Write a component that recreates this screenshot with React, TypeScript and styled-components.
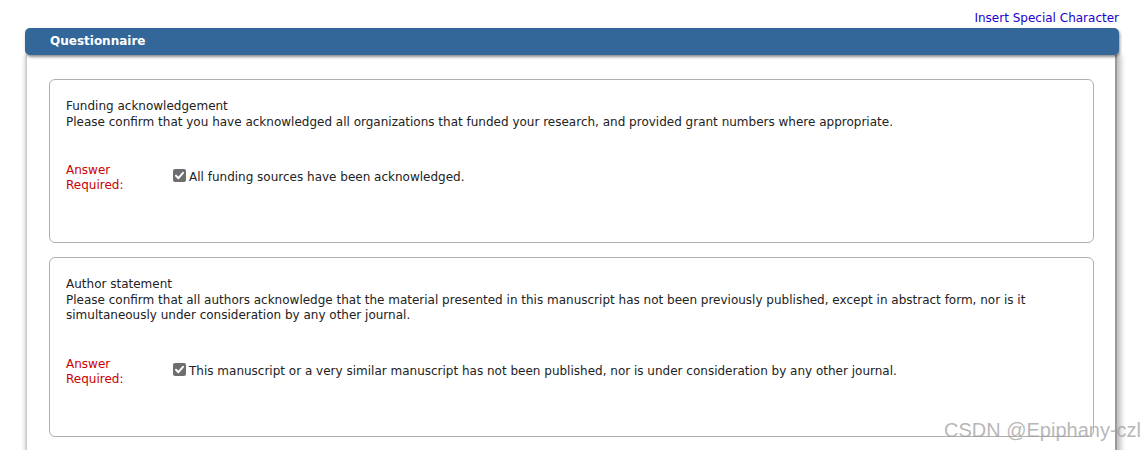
import styled, { createGlobalStyle } from 'styled-components'

const GlobalStyle = createGlobalStyle`
  html, body {
    margin: 0;
    padding: 0;
    background: #ffffff;
  }
  body {
    font-family: "DejaVu Sans", Verdana, sans-serif;
    font-size: 12px;
    color: #222;
  }
`

const questions = [
  {
    title: 'Funding acknowledgement',
    text: 'Please confirm that you have acknowledged all organizations that funded your research, and provided grant numbers where appropriate.',
    answer: 'All funding sources have been acknowledged.',
    height: 164,
  },
  {
    title: 'Author statement',
    text: 'Please confirm that all authors acknowledge that the material presented in this manuscript has not been previously published, except in abstract form, nor is it simultaneously under consideration by any other journal.',
    answer: 'This manuscript or a very similar manuscript has not been published, nor is under consideration by any other journal.',
    height: 180,
  },
]

const Check = () => (
  <CheckBox>
    <svg width="13" height="13" viewBox="0 0 13 13">
      <rect x="0" y="0" width="13" height="13" rx="2" fill="#6e6e6e" />
      <path d="M3 6.8 L5.4 9.2 L10 3.8" stroke="#fff" strokeWidth="2" fill="none" strokeLinecap="round" strokeLinejoin="round" />
    </svg>
  </CheckBox>
)

export default function App() {
  return (
    <Page>
      <GlobalStyle />
      <TopBar>
        <SpecialLink href="#">Insert Special Character</SpecialLink>
      </TopBar>
      <Panel>
        <PanelHeader>Questionnaire</PanelHeader>
        <PanelBody>
          {questions.map((q) => (
            <QuestionCard key={q.title} $height={q.height}>
              <QuestionTitle>{q.title}</QuestionTitle>
              <QuestionText>{q.text}</QuestionText>
              <AnswerRow>
                <RequiredLabel>
                  Answer
                  <br />
                  Required:
                </RequiredLabel>
                <AnswerOption>
                  <Check />
                  <AnswerText>{q.answer}</AnswerText>
                </AnswerOption>
              </AnswerRow>
            </QuestionCard>
          ))}
        </PanelBody>
      </Panel>
      <Watermark>CSDN @Epiphany-czl</Watermark>
    </Page>
  )
}

const Page = styled.div`
  position: relative;
  width: 1145px;
  height: 450px;
  overflow: hidden;
  padding: 10px 26px 0 25px;
  box-sizing: border-box;
`

const TopBar = styled.div`
  display: flex;
  justify-content: flex-end;
  height: 18px;
`

const SpecialLink = styled.a`
  font-size: 12px;
  color: #2200cc;
  text-decoration: none;
  line-height: 16px;
`

const Panel = styled.div`
  display: flex;
  flex-direction: column;
`

const PanelHeader = styled.div`
  height: 27px;
  background: #336699;
  color: #fff;
  font-weight: bold;
  font-size: 12px;
  line-height: 27px;
  padding-left: 25px;
  border-radius: 5px;
  box-shadow: 1px 2px 3px rgba(0, 0, 0, 0.45);
  position: relative;
  z-index: 1;
`

const PanelBody = styled.div`
  margin: 0 2px 0 1px;
  background: #fff;
  border-left: 1px solid #c8c8c8;
  border-right: 2px solid #9a9a9a;
  box-shadow: -2px 0 3px rgba(0, 0, 0, 0.15), 4px 0 5px rgba(0, 0, 0, 0.25);
  padding: 24px 21px 20px 22px;
  display: flex;
  flex-direction: column;
  gap: 14px;
`

const QuestionCard = styled.div<{ $height: number }>`
  height: ${(p) => p.$height}px;
  box-sizing: border-box;
  border: 1px solid #b0b0b0;
  border-radius: 6px;
  padding: 19px 16px 0 16px;
`

const QuestionTitle = styled.div`
  line-height: 15.5px;
  color: #222;
`

const QuestionText = styled.div`
  line-height: 15.5px;
  color: #222;
`

const AnswerRow = styled.div`
  display: flex;
  margin-top: 33px;
`

const RequiredLabel = styled.div`
  width: 107px;
  color: #cc0000;
  line-height: 15px;
  flex-shrink: 0;
`

const AnswerOption = styled.label`
  display: flex;
  align-items: flex-start;
  gap: 3px;
  padding-top: 7px;
  color: #222;
`

const AnswerText = styled.span`
  line-height: 15px;
`

const CheckBox = styled.span`
  display: inline-flex;
  margin-top: -1px;
`

const Watermark = styled.div`
  position: absolute;
  right: 4px;
  bottom: 8px;
  font-family: "Liberation Sans", Arial, sans-serif;
  font-size: 20px;
  color: rgba(160, 160, 160, 0.75);
  pointer-events: none;
`
